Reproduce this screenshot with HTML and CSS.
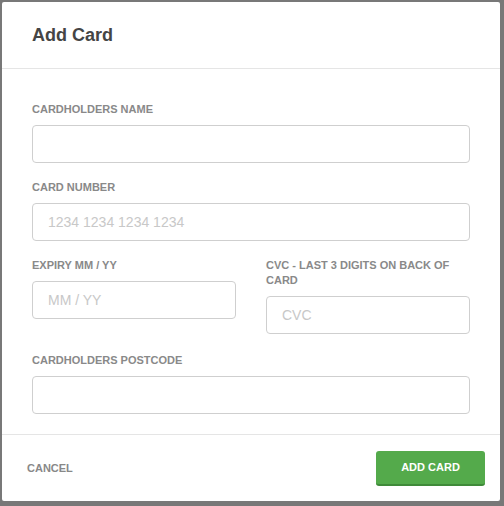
FILE: index.html
```html
<!DOCTYPE html>
<html>
<head>
<meta charset="utf-8">
<link rel="stylesheet" href="styles.css">
</head>
<body>
<div class="backdrop">
  <div class="modal">
    <div class="modal-header">
      <h2 class="modal-title">Add Card</h2>
    </div>
    <div class="modal-body">
      <div class="field">
        <label class="label">Cardholders Name</label>
        <input class="input" type="text">
      </div>
      <div class="field">
        <label class="label">Card Number</label>
        <input class="input" type="text" placeholder="1234 1234 1234 1234">
      </div>
      <div class="field-row">
        <div class="col">
          <label class="label">Expiry MM / YY</label>
          <input class="input" type="text" placeholder="MM / YY">
        </div>
        <div class="col">
          <label class="label">CVC - Last 3 digits on back of card</label>
          <input class="input" type="text" placeholder="CVC">
        </div>
      </div>
      <div class="field last">
        <label class="label">Cardholders Postcode</label>
        <input class="input" type="text">
      </div>
    </div>
    <div class="modal-footer">
      <button class="btn-cancel" type="button">Cancel</button>
      <button class="btn-add" type="button">Add Card</button>
    </div>
  </div>
</div>
</body>
</html>
```

FILE: styles.css
```css
* { box-sizing: border-box; }
html, body {
  margin: 0;
  padding: 0;
  background: #787878;
  font-family: "Liberation Sans", Arial, sans-serif;
}
.backdrop {
  width: 504px;
  height: 506px;
  padding: 2px 4px 5px 2px;
}
.modal {
  width: 498px;
  height: 499px;
  background: #fff;
  border-radius: 2px;
  display: flex;
  flex-direction: column;
}
.modal-header {
  height: 67px;
  border-bottom: 1px solid #e5e5e5;
  display: flex;
  align-items: center;
  padding: 0 30px;
}
.modal-title {
  margin: 0;
  font-size: 18px;
  line-height: 20px;
  font-weight: bold;
  color: #454545;
}
.modal-body {
  padding: 33px 30px 20px;
  border-bottom: 1px solid #e5e5e5;
}
.field {
  display: flex;
  flex-direction: column;
  margin-bottom: 17px;
}
.field.last { margin-bottom: 0; }
.field-row {
  display: grid;
  grid-template-columns: 1fr 1fr;
  column-gap: 30px;
  align-items: start;
  margin-top: 2px;
  margin-bottom: 19px;
}
.col {
  display: flex;
  flex-direction: column;
}
.label {
  display: block;
  font-size: 11px;
  line-height: 15px;
  font-weight: bold;
  text-transform: uppercase;
  color: #898989;
  margin-bottom: 8px;
}
.input {
  display: block;
  width: 100%;
  height: 38px;
  border: 1px solid #cfcfcf;
  border-radius: 4px;
  padding: 0 15px;
  font-family: "Liberation Sans", Arial, sans-serif;
  font-size: 14px;
  color: #444;
  background: #fff;
  outline: none;
}
.input::placeholder { color: #c8c8c8; }
.modal-footer {
  flex: 1;
  display: flex;
  align-items: center;
  justify-content: space-between;
  padding: 0 15px 0 25px;
}
.btn-cancel {
  background: none;
  border: none;
  padding: 0;
  font-family: "Liberation Sans", Arial, sans-serif;
  font-size: 11px;
  font-weight: bold;
  text-transform: uppercase;
  color: #888;
}
.btn-add {
  width: 109px;
  height: 35px;
  background: #54aa4b;
  border: none;
  border-bottom: 2px solid #3f8a39;
  border-radius: 3px;
  font-family: "Liberation Sans", Arial, sans-serif;
  font-size: 11px;
  font-weight: bold;
  text-transform: uppercase;
  color: #fff;
  padding: 0;
}
```
